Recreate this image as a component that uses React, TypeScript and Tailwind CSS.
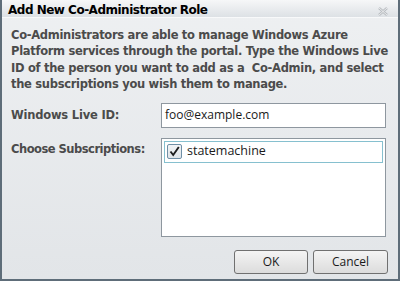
export default function App() {
  return (
    <div className="w-[401px] h-[282px] bg-white">
      <div className="w-[400px] h-[281px] flex flex-col border-l-2 border-r-2 border-b-2 border-[#5e6d79] bg-gradient-to-b from-[#eef0f2] to-[#e2e5e8]">
        {/* title bar */}
        <div className="h-[18px] shrink-0 flex items-center justify-between pl-[6px] pr-[10px] bg-gradient-to-b from-[#f6f7f8] to-[#dde1e5] border-b border-[#f8f9fa]">
          <span className="font-['DejaVu_Sans',sans-serif] font-bold text-[12px] text-black leading-none tracking-[-0.5px] mt-[2px]">
            Add New Co-Administrator Role
          </span>
          <svg width="10" height="9" viewBox="0 0 10 9" className="mt-[6px]">
            <path d="M1 1 L9 8 M9 1 L1 8" stroke="#b8bcc0" strokeWidth="2.4" />
            <path d="M1 1 L9 8 M9 1 L1 8" stroke="#f4f5f6" strokeWidth="0.8" />
          </svg>
        </div>

        <div className="flex-1 flex flex-col px-[9px] pt-[9px] font-['DejaVu_Sans',sans-serif]">
          <p className="font-bold text-[11.5px] leading-[16.4px] text-[#4b4b4b] tracking-[-0.3px]">
            Co-Administrators are able to manage Windows Azure Platform services through the portal. Type the Windows Live ID of the person you want to add as a&nbsp; Co-Admin, and select the subscriptions you wish them to manage.
          </p>

          <div className="flex mt-[10px]">
            <div className="w-[150px] pt-[4px] font-bold text-[11.5px] text-[#4b4b4b] tracking-[-0.2px]">Windows Live ID:</div>
            <div className="w-[225px] h-[25px] bg-white border border-[#8e979f] flex items-center px-[3px] font-['Open_Sans',sans-serif] text-[12px] text-[#1a1a1a]">
              foo@example.com
            </div>
          </div>

          <div className="flex mt-[10px]">
            <div className="w-[150px] pt-[3px] font-bold text-[11.5px] text-[#4b4b4b] tracking-[-0.5px]">Choose Subscriptions:</div>
            <div className="w-[225px] h-[99px] bg-white border border-[#8e979f] p-[2px]">
              <div className="h-[22px] border border-[#86c0cf] flex items-center px-[2px] gap-[5px]">
                <div className="w-[15px] h-[15px] border border-[#6f8fa6] rounded-[2px] bg-gradient-to-b from-[#f2f4f6] to-[#dfe4e8] flex items-center justify-center">
                  <svg width="11" height="11" viewBox="0 0 11 11">
                    <path d="M1.5 5.5 L4.2 9 L9.8 1" fill="none" stroke="#1d1d1d" strokeWidth="1.9" />
                  </svg>
                </div>
                <span className="font-['Open_Sans',sans-serif] text-[12.5px] text-[#1a1a1a]">statemachine</span>
              </div>
            </div>
          </div>

          <div className="flex justify-end gap-[5px] mt-[13px] pr-[1px]">
            <button className="w-[74px] h-[24px] rounded-[3px] border border-[#707070] bg-gradient-to-b from-[#f4f4f4] to-[#dcdcdc] font-['Open_Sans',sans-serif] text-[12px] text-[#1a1a1a]">
              OK
            </button>
            <button className="w-[75px] h-[24px] rounded-[3px] border border-[#707070] bg-gradient-to-b from-[#f4f4f4] to-[#dcdcdc] font-['Open_Sans',sans-serif] text-[12px] text-[#1a1a1a]">
              Cancel
            </button>
          </div>
        </div>
      </div>
    </div>
  )
}
